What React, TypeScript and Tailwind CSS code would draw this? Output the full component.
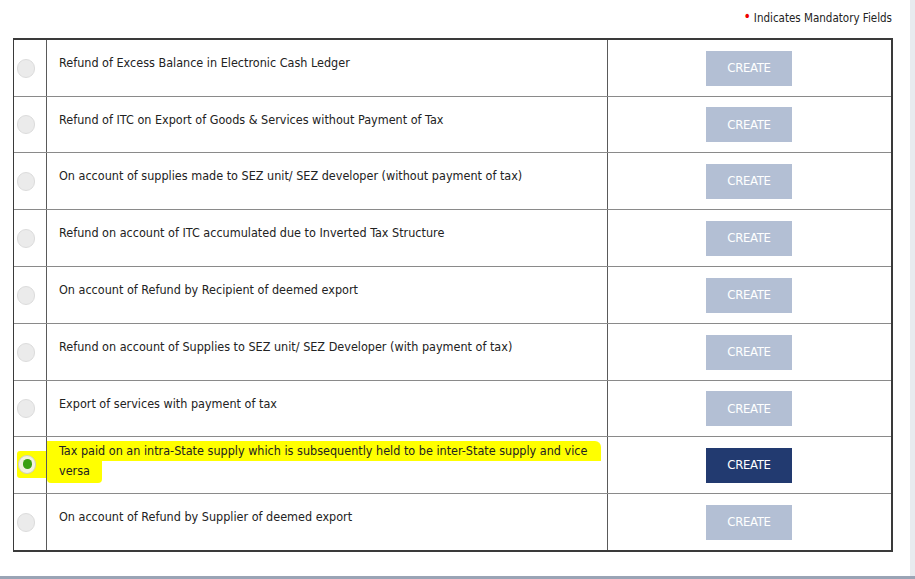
import React from "react";

const rows = [
  "Refund of Excess Balance in Electronic Cash Ledger",
  "Refund of ITC on Export of Goods & Services without Payment of Tax",
  "On account of supplies made to SEZ unit/ SEZ developer (without payment of tax)",
  "Refund on account of ITC accumulated due to Inverted Tax Structure",
  "On account of Refund by Recipient of deemed export",
  "Refund on account of Supplies to SEZ unit/ SEZ Developer (with payment of tax)",
  "Export of services with payment of tax",
  "SELECTED",
  "On account of Refund by Supplier of deemed export",
];

const heights = ["h-[56px]", "h-[56px]", "h-[57px]", "h-[57px]", "h-[57px]", "h-[57px]", "h-[56px]", "h-[57px]", "h-[57px]"];

function Radio({ checked }: { checked?: boolean }) {
  if (checked) {
    return (
      <div className="w-[18px] h-[19px] rounded-full border border-[#d0d0b8] bg-[#f2f2e0] flex items-center justify-center">
        <div className="w-[9px] h-[10px] rounded-full bg-[#3aa012]" />
      </div>
    );
  }
  return <div className="w-[18px] h-[19px] rounded-full border border-[#dcdcdc] bg-[#ebebeb]" />;
}

export default function App() {
  return (
    <div
      className="relative w-[915px] h-[579px] bg-white overflow-hidden"
      style={{ fontFamily: '"DejaVu Sans Condensed", "DejaVu Sans", sans-serif' }}
    >
      <div className="flex">
        <div className="w-[910px] h-[576px] flex flex-col">
          <div className="h-[38px] flex justify-end items-start pt-[11px] pr-[18px] text-[11.5px] text-[#222]">
            <span className="text-[#e00] text-[14px] leading-[10px] mr-[3px]">•</span>
            <span className="leading-[14px]">Indicates Mandatory Fields</span>
          </div>
          <div className="ml-[13px] w-[880px] border-t-2 border-l border-r-2 border-b-2 border-[#3a3a3a]">
            {rows.map((r, i) => {
              const sel = r === "SELECTED";
              return (
                <div
                  key={i}
                  className={`grid grid-cols-[32px_562px_284px] ${heights[i]} ${i > 0 ? "border-t border-[#8a8a8a]" : ""}`}
                >
                  <div className="flex items-center pl-[3px]">
                    {sel ? (
                      <div className="bg-[#ffff00] rounded-[3px] py-[4px] pl-[1px] pr-[14px] -mr-[14px] mt-[-2px]">
                        <Radio checked />
                      </div>
                    ) : (
                      <Radio />
                    )}
                  </div>
                  <div className="border-l border-[#5a5a5a] border-r flex items-center pl-[12px] pb-[10px] text-[12.5px] text-[#222] leading-[20px]">
                    {sel ? (
                      <div className="pt-[3px] -ml-[12px]">
                        <div className="bg-[#ffff00] pl-[12px] pr-[14px] w-fit whitespace-nowrap rounded-tr-[6px]">
                          Tax paid on an intra-State supply which is subsequently held to be inter-State supply and vice
                        </div>
                        <div className="bg-[#ffff00] pl-[12px] pr-[12px] w-fit rounded-b-[4px] pb-[2px]">versa</div>
                      </div>
                    ) : (
                      <span>{r}</span>
                    )}
                  </div>
                  <div className="flex items-center justify-center pr-[2px]">
                    <button
                      className={`w-[86px] h-[35px] text-white text-[13px] tracking-[-0.3px] ${
                        sel ? "bg-[#223a70]" : "bg-[#b3bfd4]"
                      }`}
                    >
                      CREATE
                    </button>
                  </div>
                </div>
              );
            })}
          </div>
        </div>
        <div className="w-[5px] h-[576px] bg-[#e8ebef]" />
      </div>
      <div className="h-[3px] bg-[#9aa4b5]" />
    </div>
  );
}
